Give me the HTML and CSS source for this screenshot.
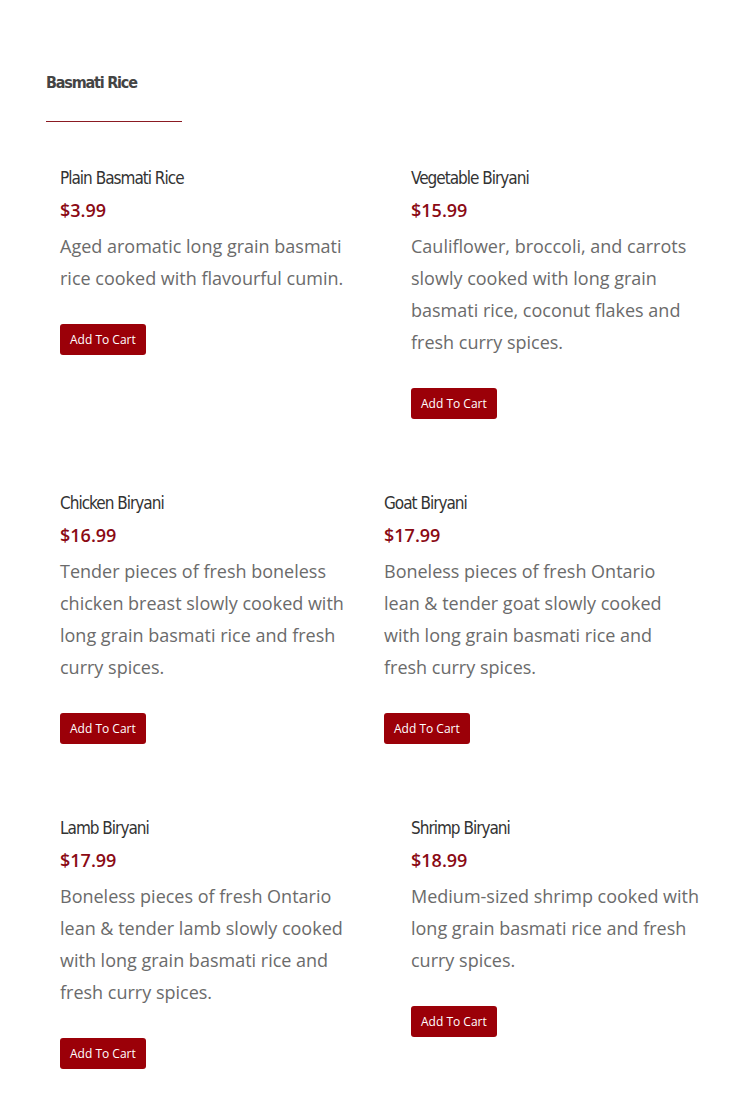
FILE: index.html
```html
<!DOCTYPE html>
<html lang="en">
<head>
    <meta charset="UTF-8">
    <meta name="viewport" content="width=device-width, initial-scale=1.0">
    <title>Basmati Rice</title>
    <link rel="stylesheet" href="styles.css">
</head>
<body>
    <div class="menu-section">
        <h2 class="section-title">Basmati Rice</h2>
        <div class="section-rule"></div>

        <div class="menu-row">
            <div class="menu-item">
                <h3 class="item-name">Plain Basmati Rice</h3>
                <div class="item-price">$3.99</div>
                <p class="item-desc">Aged aromatic long grain basmati rice cooked with flavourful cumin.</p>
                <button class="cart-button">Add To Cart</button>
            </div>
            <div class="menu-item">
                <h3 class="item-name">Vegetable Biryani</h3>
                <div class="item-price">$15.99</div>
                <p class="item-desc">Cauliflower, broccoli, and carrots slowly cooked with long grain basmati rice, coconut flakes and fresh curry spices.</p>
                <button class="cart-button">Add To Cart</button>
            </div>
        </div>

        <div class="menu-row menu-row-narrow">
            <div class="menu-item">
                <h3 class="item-name">Chicken Biryani</h3>
                <div class="item-price">$16.99</div>
                <p class="item-desc">Tender pieces of fresh boneless chicken breast slowly cooked with long grain basmati rice and fresh curry spices.</p>
                <button class="cart-button">Add To Cart</button>
            </div>
            <div class="menu-item">
                <h3 class="item-name">Goat Biryani</h3>
                <div class="item-price">$17.99</div>
                <p class="item-desc">Boneless pieces of fresh Ontario lean &amp; tender goat slowly cooked with long grain basmati rice and fresh curry spices.</p>
                <button class="cart-button">Add To Cart</button>
            </div>
        </div>

        <div class="menu-row">
            <div class="menu-item">
                <h3 class="item-name">Lamb Biryani</h3>
                <div class="item-price">$17.99</div>
                <p class="item-desc">Boneless pieces of fresh Ontario lean &amp; tender lamb slowly cooked with long grain basmati rice and fresh curry spices.</p>
                <button class="cart-button">Add To Cart</button>
            </div>
            <div class="menu-item">
                <h3 class="item-name">Shrimp Biryani</h3>
                <div class="item-price">$18.99</div>
                <p class="item-desc">Medium-sized shrimp cooked with long grain basmati rice and fresh curry spices.</p>
                <button class="cart-button">Add To Cart</button>
            </div>
        </div>
    </div>
</body>
</html>
```

FILE: styles.css
```css
body {
    margin: 0;
    font-family: 'Open Sans', 'Noto Sans', sans-serif;
    color: #666;
    background-color: #fff;
}
.menu-section {
    padding: 71px 0 40px 46px;
}
.section-title {
    margin: 0;
    font-family: 'DejaVu Sans Condensed', 'DejaVu Sans', sans-serif;
    font-stretch: condensed;
    font-size: 16px;
    font-weight: bold;
    line-height: 24px;
    letter-spacing: -1.2px;
    color: #444;
}
.section-rule {
    width: 136px;
    height: 1px;
    margin-top: 26px;
    background-color: #8b1a22;
}
.menu-row {
    display: grid;
    grid-template-columns: 351px 300px;
    padding-left: 14px;
    margin-top: 40px;
}
.menu-row + .menu-row {
    margin-top: 68px;
}
.menu-row-narrow {
    grid-template-columns: 324px 300px;
}
.item-name {
    margin: 0;
    font-family: 'DejaVu Sans Condensed', 'DejaVu Sans', sans-serif;
    font-stretch: condensed;
    font-size: 17px;
    font-weight: normal;
    line-height: 32px;
    letter-spacing: -1px;
    color: #333;
}
.item-price {
    margin-bottom: 4px;
    font-size: 18px;
    font-weight: 600;
    line-height: 32px;
    color: #8b0a14;
}
.item-desc {
    width: 300px;
    margin: 0;
    font-size: 18px;
    line-height: 32px;
    color: #6b6b6b;
}
.cart-button {
    display: block;
    height: 31px;
    margin-top: 30px;
    padding: 0 10px;
    border: none;
    border-radius: 3px;
    background-color: #9b0008;
    color: #fff;
    font-family: 'Open Sans', 'Noto Sans', sans-serif;
    font-size: 12px;
    cursor: pointer;
}
```
